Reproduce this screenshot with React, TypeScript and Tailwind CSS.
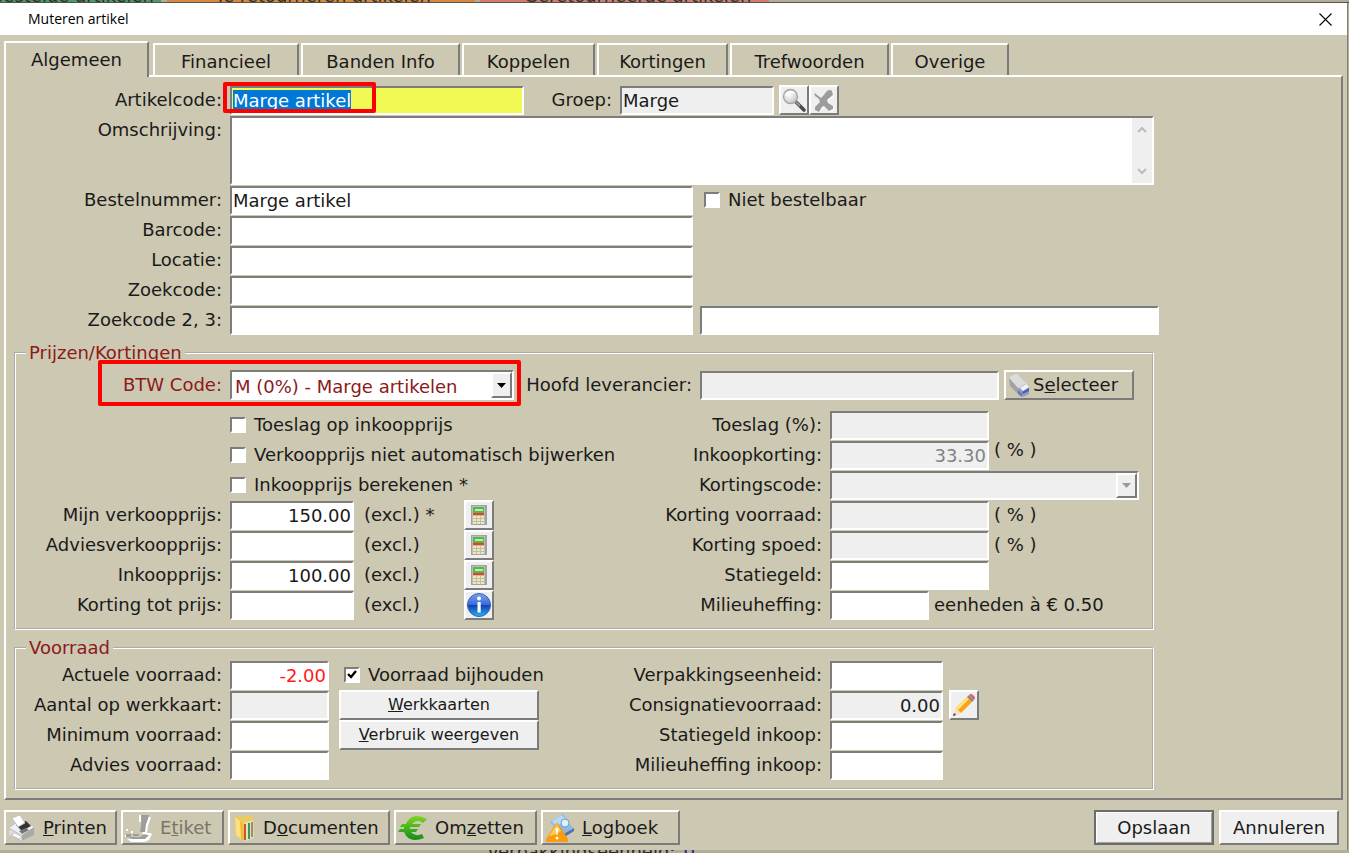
import { useEffect, useRef } from "react";
import type { ReactNode } from "react";

const sunken =
  "border-2 border-t-[#7d7d7d] border-l-[#7d7d7d] border-b-white border-r-white outline-none";
const raised =
  "border-2 border-t-white border-l-white border-b-[#7b7b7b] border-r-[#7b7b7b]";

type FieldProps = {
  id: string;
  width: string;
  value?: string;
  disabled?: boolean;
  right?: boolean;
  color?: string;
};

function Field({ id, width, value = "", disabled, right, color = "text-[#1a1a1a]" }: FieldProps) {
  return (
    <input
      id={id}
      type="text"
      defaultValue={value}
      readOnly={disabled}
      className={`h-[29px] shrink-0 px-px pt-px ${sunken} ${width} ${color} ${
        disabled ? "bg-[#efefef]" : "bg-white"
      } ${right ? "text-right" : ""}`}
    />
  );
}

function Label({ htmlFor, width = "w-[206px]", children }: { htmlFor: string; width?: string; children: ReactNode }) {
  return (
    <label htmlFor={htmlFor} className={`mr-2 shrink-0 whitespace-nowrap text-right ${width}`}>
      {children}
    </label>
  );
}

function Row({ children }: { children: ReactNode }) {
  return <div className="relative flex h-[30px] items-center">{children}</div>;
}

function Check({ id, label, checked }: { id: string; label: string; checked?: boolean }) {
  return (
    <div className="flex items-center gap-2">
      <span className="relative flex h-4 w-4">
        <input id={id} type="checkbox" defaultChecked={checked} className={`peer h-4 w-4 appearance-none bg-white ${sunken}`} />
        <svg
          viewBox="0 0 16 16"
          className="pointer-events-none absolute inset-0 hidden peer-checked:block"
          fill="none"
          stroke="#000"
          strokeWidth="2.4"
        >
          <path d="M4 7l3 3 5-6" />
        </svg>
      </span>
      <label htmlFor={id} className="whitespace-nowrap">
        {label}
      </label>
    </div>
  );
}

function IconButton({ label, disabled, children }: { label: string; disabled?: boolean; children: ReactNode }) {
  return (
    <button
      type="button"
      aria-label={label}
      disabled={disabled}
      className={`flex h-[30px] w-[30px] shrink-0 items-center justify-center bg-[#efefef] ${raised}`}
    >
      {children}
    </button>
  );
}

function Group({ title, children }: { title: string; children: ReactNode }) {
  return (
    <fieldset className="w-full max-w-[1140px] border-2 border-white pb-2 [border-style:groove]">
      <legend className="ml-[10px] px-[3px] leading-5 text-[#8b1a1a]">{title}</legend>
      {children}
    </fieldset>
  );
}

/* Icons */

function SearchIcon() {
  return (
    <svg width="26" height="26" viewBox="0 0 26 26">
      <defs>
        <radialGradient id="lens" cx="0.4" cy="0.35" r="0.7">
          <stop offset="0" stopColor="#fff" />
          <stop offset="1" stopColor="#c4c4c4" />
        </radialGradient>
      </defs>
      <path d="M15 15l8 8" stroke="#4a4a4a" strokeWidth="3.6" strokeLinecap="round" />
      <path d="M15 15l4 4" stroke="#999" strokeWidth="2" />
      <circle cx="9.5" cy="9.5" r="7" fill="url(#lens)" stroke="#a6a6a6" strokeWidth="1.4" />
      <path d="M4.5 8.5a6 5 0 0 1 9-2.500" stroke="#fff" strokeWidth="1.6" fill="none" />
    </svg>
  );
}

function ClearIcon() {
  return (
    <svg width="24" height="24" viewBox="0 0 24 24">
      <path
        d="M2 5l2 1 5 4 2-2 4-5q3-2 5 0l1 4-6 5 1 3 5 3v3l-4 2-5-5-2 1-3 5-4-2v-3l5-5-1-3-4-3z"
        fill="#fff"
        transform="translate(1 1)"
      />
      <path d="M2 5l2 1 5 4 2-2 4-5q3-2 5 0l1 4-6 5 1 3 5 3v3l-4 2-5-5-2 1-3 5-4-2v-3l5-5-1-3-4-3z" fill="#9c9c9c" />
    </svg>
  );
}

function CalculatorIcon() {
  return (
    <svg width="16" height="20" viewBox="0 0 16 20" shapeRendering="crispEdges" className="shrink-0">
      <rect x="0" y="0" width="16" height="20" fill="#a2a2a0" />
      <rect x="1" y="1" width="13" height="18" fill="#bcbcba" />
      <rect x="2" y="2" width="11" height="6" fill="#55b84e" />
      <rect x="4" y="4" width="8" height="2" fill="#b5f5a0" />
      <rect x="2" y="8" width="11" height="2" fill="#ee3d22" />
      {[11, 14, 17].map((y) =>
        [2, 6, 10].map((x) => <rect key={`${x}-${y}`} x={x} y={y} width="3" height="2" fill="#eeeaae" />)
      )}
    </svg>
  );
}

function InfoIcon() {
  return (
    <svg width="26" height="26" viewBox="0 0 26 26">
      <defs>
        <linearGradient id="info" x1="0" y1="0" x2="0" y2="1">
          <stop offset="0" stopColor="#7aa2ee" />
          <stop offset="0.48" stopColor="#3b6bd8" />
          <stop offset="0.52" stopColor="#1440b4" />
          <stop offset="1" stopColor="#25b4f0" />
        </linearGradient>
      </defs>
      <circle cx="13" cy="13" r="11.5" fill="url(#info)" stroke="#3c5fc0" strokeWidth="1" />
      <circle cx="13" cy="6.5" r="2" fill="#fff" />
      <rect x="11.5" y="10" width="3.200" height="10.500" fill="#fff" />
    </svg>
  );
}

function TruckIcon() {
  return (
    <svg width="24" height="26" viewBox="0 0 24 26" className="shrink-0">
      <path d="M2 6q4-4 8-4l10 10-8 6z" fill="#dcdcdc" />
      <path d="M2 6l10 11-1 5-8-8z" fill="#a2a2a2" />
      <path d="M11 17l7-5 4 4v6l-6 3-5-4z" fill="#8d9cc8" />
      <path d="M13 16l6-4 3 3-6 4z" fill="#f2f4fb" />
      <path d="M15 20l7-4v3l-6 3z" fill="#4a62ab" />
      <path d="M11 18l4 4v3l-4-3z" fill="#6876a0" />
    </svg>
  );
}

function PrinterIcon() {
  return (
    <svg width="30" height="28" viewBox="0 0 30 28" className="shrink-0">
      <path d="M2 14l9-7 16 6v8l-13 6L2 21z" fill="#a9a9a9" />
      <path d="M2 14l10-7 15 6-12 8z" fill="#f0f0f0" />
      <path d="M2 15l13 6v6L2 21z" fill="#dcdcdc" />
      <path d="M9 11l10-4 5 5-9 5z" fill="#333" />
      <path d="M5 4l8-3 5 8-7 4z" fill="#fff" stroke="#bbb" strokeWidth="0.8" />
      <path d="M12 17l7-3 3 2-7 4z" fill="#777" />
      <path d="M4 21l8 4 3-2-7-4z" fill="#fff" stroke="#aaa" strokeWidth="0.6" />
    </svg>
  );
}

function StampIcon() {
  return (
    <svg width="30" height="28" viewBox="0 0 30 28" className="shrink-0">
      <path d="M15 1h3v4l-1 3h-2zM24 3h3l-3 9-1 7h3l2 1-3 6-4 2H7l-4-3h16l4-5h-5z" fill="#fff" />
      <path d="M17 1h8q-1 5-3 9l-1 8h-5q2-8 1-17z" fill="#9d9d9d" />
      <path d="M2 20h5v3H2zM9 20h6v2H9zM19 21h6l-4 4H8l-3-2h11z" fill="#9d9d9d" />
      <path d="M2 15h2v2H2zM7 17h2v2H7zM1 21h1v2H1z" fill="#fff" />
    </svg>
  );
}

function FolderIcon() {
  return (
    <svg width="26" height="28" viewBox="0 0 26 28" className="shrink-0">
      <path d="M4 3l18-1 1 20-9 4z" fill="#efca5c" />
      <path d="M13 9l9-3 1 18-9 3z" fill="#e3dfd0" />
      <path d="M13 10h2v16h-2z" fill="#c8572f" />
      <path d="M17 9h2v16h-2z" fill="#3d9a3d" />
      <path d="M20 8h2v15h-2z" fill="#a58b62" />
      <path d="M4 3l8 6 1 18-8-6z" fill="#f2bb34" />
      <path d="M4 3l5 4 1 18-5-4z" fill="#ffdf80" />
    </svg>
  );
}

function EuroIcon() {
  return (
    <svg width="32" height="28" viewBox="0 0 32 28" className="shrink-0" fill="none">
      <defs>
        <linearGradient id="euro" x1="0" y1="0" x2="0" y2="1">
          <stop offset="0" stopColor="#7bd820" />
          <stop offset="1" stopColor="#138c1a" />
        </linearGradient>
      </defs>
      <path
        d="M30 5l-4 4q-6-5-11 1h9l-2 3h-9v2h8l-2 3h-5q4 5 11 2l2 4q-15 6-20-6H1l2-3h4v-2H3l2-3h4Q15-3 30 5z"
        fill="url(#euro)"
      />
    </svg>
  );
}

function LogIcon() {
  return (
    <svg width="32" height="30" viewBox="0 0 32 30" className="shrink-0">
      <path d="M6 9l13-8 10 14-11 8z" fill="#8fb9e2" />
      <path d="M18 22l12-7v3l-11 7z" fill="#4f75a8" />
      <path d="M8 8l10-6 4 5-10 7z" fill="#b9d8f3" />
      <circle cx="21" cy="10" r="4" fill="#dff0fc" stroke="#6fa0d2" />
      <path d="M13 10q1 0 2 2l9 14q1 3-2 3H4q-3 0-2-3l9-14q1-2 2-2z" fill="#fb9a0c" />
      <path d="M13 11l4 7q-5 4-12 5z" fill="#ffcb52" />
      <path d="M11.500 15h3l-1 7h-1z" fill="#fff" />
      <circle cx="13" cy="25" r="1.500" fill="#fff" />
    </svg>
  );
}

function PencilIcon() {
  return (
    <svg width="26" height="26" viewBox="0 0 26 26">
      <path d="M2 24l3-8 5 5z" fill="#f6dfb4" />
      <path d="M2 24l1-3 2 2z" fill="#333" />
      <path d="M5 16L16 5l5 5-11 11z" fill="#fba21a" />
      <path d="M5 16L16 5l2 2L7 18z" fill="#ffe27a" />
      <path d="M16 5l2-2 5 5-2 2z" fill="#8a8a8a" />
      <path d="M18 3q2-2 4 0l1 1q2 2 0 4z" fill="#e0606a" />
    </svg>
  );
}

function ToolButton({ width, icon, disabled, children }: { width: string; icon: ReactNode; disabled?: boolean; children: ReactNode }) {
  return (
    <button
      type="button"
      disabled={disabled}
      className={`flex h-[35px] items-center gap-[6px] whitespace-nowrap pl-px ${raised} ${width} ${
        disabled ? "text-[#77756c]" : ""
      }`}
    >
      {icon}
      <span>{children}</span>
    </button>
  );
}

const tabs = [
  { name: "Financieel", width: "w-[146px]" },
  { name: "Banden Info", width: "w-[159px]" },
  { name: "Koppelen", width: "w-[133px]" },
  { name: "Kortingen", width: "w-[131px]" },
  { name: "Trefwoorden", width: "w-[159px]" },
  { name: "Overige", width: "w-[118px]" },
];

const prices = [
  { id: "verkoop", label: "Mijn verkoopprijs:", value: "150.00", note: "(excl.) *" },
  { id: "advies", label: "Adviesverkoopprijs:", value: "", note: "(excl.)" },
  { id: "inkoop", label: "Inkoopprijs:", value: "100.00", note: "(excl.)" },
  { id: "korting", label: "Korting tot prijs:", value: "", note: "(excl.)", info: true },
];

export default function App() {
  const codeRef = useRef<HTMLInputElement>(null);

  useEffect(() => {
    codeRef.current?.focus();
    codeRef.current?.select();
  }, []);

  return (
    <div className="flex min-h-screen flex-col bg-[#b3ad98] font-['DejaVu_Sans',Verdana,sans-serif] text-[18px] leading-5 text-[#1a1a1a]">
      {/* Window behind the dialog */}
      <div className="flex h-[3px] items-end overflow-hidden whitespace-nowrap border-b border-[#55534a] leading-3 text-[#33302a]">
        <span className="flex w-[161px] justify-end bg-[#4d9a68] pr-[7px]">bestelde artikelen</span>
        <span className="ml-[6px] w-[308px] bg-[#d6893f] pl-[48px]">Te retourneren artikelen</span>
        <span className="ml-[5px] w-[289px] bg-[#cf7d70] pl-[44px]">Geretourneerde artikelen</span>
      </div>

      <div className="mr-px flex flex-col border-r border-[#85816f] bg-[#cdc8b1]">
        <header className="flex h-8 items-center justify-between bg-white pl-7 pr-[15px] font-['Open_Sans',sans-serif] text-[14px] text-black">
          <h1>Muteren artikel</h1>
          <button type="button" aria-label="Sluiten">
            <svg width="13" height="13" viewBox="0 0 13 13" stroke="#000" strokeWidth="1.100">
              <path d="M0.500 0.500l12 12M12.500 0.500l-12 12" />
            </svg>
          </button>
        </header>

        <form className="px-1 pt-[6px]" onSubmit={(e) => e.preventDefault()}>
          <div role="tablist" className="flex items-end gap-[2px]">
            <button
              type="button"
              role="tab"
              aria-selected="true"
              className="relative mr-[2px] -mb-[2px] h-[36px] w-[145px] border-2 border-b-0 border-t-white border-l-white border-r-[#7b7b7b] bg-[#cdc8b1]"
            >
              Algemeen
            </button>
            {tabs.map((tab) => (
              <button
                key={tab.name}
                type="button"
                role="tab"
                aria-selected="false"
                className={`h-8 whitespace-nowrap border-2 border-b-0 border-t-white border-l-white border-r-[#7b7b7b] pt-1 ${tab.width}`}
              >
                {tab.name}
              </button>
            ))}
          </div>

          <div className="border-2 border-t-white border-l-white border-b-[#7b7b7b] border-r-[#7b7b7b] pb-2 pl-2 pt-2">
            <div className="mb-2 pl-[2px]">
              <Row>
                <Label htmlFor="artikelcode">Artikelcode:</Label>
                <input
                  id="artikelcode"
                  ref={codeRef}
                  type="text"
                  defaultValue="Marge artikel"
                  className={`h-[29px] w-[294px] bg-[#f1f955] px-px pt-px selection:bg-[#0078d7] selection:text-white ${sunken}`}
                />
                <Label htmlFor="groep" width="w-[88px]">Groep:</Label>
                <Field id="groep" width="w-[154px]" value="Marge" disabled />
                <div className="ml-[5px] flex">
                  <IconButton label="Zoeken"><SearchIcon /></IconButton>
                  <IconButton label="Wissen" disabled><ClearIcon /></IconButton>
                </div>
                <div className="pointer-events-none absolute -top-[3px] left-[207px] h-[31px] w-[153px] rounded-xs border-4 border-[#fe0000]" />
              </Row>
              <div className="flex h-[70px] items-start pt-px">
                <div className="flex h-7 items-center">
                  <Label htmlFor="omschrijving">Omschrijving:</Label>
                </div>
                <div className={`flex h-[69px] w-[924px] bg-white ${sunken}`}>
                  <textarea id="omschrijving" className="flex-1 resize-none overflow-hidden outline-none" />
                  <div className="flex w-5 flex-col items-center justify-between bg-[#efefef] py-2">
                    <svg width="10" height="7" viewBox="0 0 10 7" fill="none" stroke="#bcbcbc" strokeWidth="2">
                      <path d="M1 6l4-4 4 4" />
                    </svg>
                    <svg width="10" height="7" viewBox="0 0 10 7" fill="none" stroke="#bcbcbc" strokeWidth="2">
                      <path d="M1 1l4 4 4-4" />
                    </svg>
                  </div>
                </div>
              </div>
              <Row>
                <Label htmlFor="bestelnummer">Bestelnummer:</Label>
                <Field id="bestelnummer" width="w-[463px] mr-[11px]" value="Marge artikel" />
                <Check id="nietbestelbaar" label="Niet bestelbaar" />
              </Row>
              <Row>
                <Label htmlFor="barcode">Barcode:</Label>
                <Field id="barcode" width="w-[463px]" />
              </Row>
              <Row>
                <Label htmlFor="locatie">Locatie:</Label>
                <Field id="locatie" width="w-[463px]" />
              </Row>
              <Row>
                <Label htmlFor="zoekcode">Zoekcode:</Label>
                <Field id="zoekcode" width="w-[463px]" />
              </Row>
              <Row>
                <Label htmlFor="zoekcode2">Zoekcode 2, 3:</Label>
                <Field id="zoekcode2" width="w-[463px] mr-[7px]" />
                <input aria-label="Zoekcode 3" type="text" className={`h-[29px] w-[459px] bg-white ${sunken}`} />
              </Row>
            </div>

            <Group title="Prijzen/Kortingen">
              <div className="mb-[10px] pt-[7px]">
                <Row>
                  <label htmlFor="btw" className="mr-2 w-[206px] shrink-0 text-right text-[#8b1a1a]">
                    BTW Code:
                  </label>
                  <div className="relative flex">
                    <select id="btw" className={`h-[30px] w-[284px] appearance-none bg-white pl-[3px] pt-[3px] text-[#8b1a1a] ${sunken}`}>
                      <option>M (0%) - Marge artikelen</option>
                    </select>
                    <span className={`pointer-events-none absolute right-[2px] top-[2px] flex h-[26px] w-[21px] items-center justify-center bg-[#efefef] ${raised}`}>
                      <svg width="9" height="5" viewBox="0 0 9 5"><path d="M0 0h9L4.500 5z" fill="#000" /></svg>
                    </span>
                  </div>
                  <Label htmlFor="leverancier" width="w-[178px]">Hoofd leverancier:</Label>
                  <Field id="leverancier" width="w-[299px]" disabled />
                  <button type="button" className={`ml-[5px] flex h-[30px] w-[130px] items-center gap-[2px] pl-px ${raised}`}>
                    <TruckIcon />
                    <span>S<u>e</u>lecteer</span>
                  </button>
                  <div className="pointer-events-none absolute -top-[10px] left-[82px] h-[46px] w-[423px] rounded-xs border-4 border-[#fe0000]" />
                </Row>
              </div>
              <div className="flex">
                <div className="w-[610px] shrink-0">
                  <div className="pl-[214px]">
                    <Row><Check id="toeslagop" label="Toeslag op inkoopprijs" /></Row>
                    <Row><Check id="nietauto" label="Verkoopprijs niet automatisch bijwerken" /></Row>
                    <Row><Check id="berekenen" label="Inkoopprijs berekenen *" /></Row>
                  </div>
                  {prices.map((price) => (
                    <Row key={price.id}>
                      <Label htmlFor={price.id}>{price.label}</Label>
                      <Field id={price.id} width="w-[124px]" value={price.value} right />
                      <span className="w-[110px] pl-[10px]">{price.note}</span>
                      <IconButton label={price.info ? "Informatie" : "Berekenen"}>
                        {price.info ? <InfoIcon /> : <CalculatorIcon />}
                      </IconButton>
                    </Row>
                  ))}
                </div>
                <div>
                  <Row>
                    <Label htmlFor="toeslag" width="w-[196px]">Toeslag (%):</Label>
                    <Field id="toeslag" width="w-[159px]" disabled />
                  </Row>
                  <Row>
                    <Label htmlFor="inkoopkorting" width="w-[196px]">Inkoopkorting:</Label>
                    <Field id="inkoopkorting" width="w-[159px]" value="33.30" color="text-[#838383]" disabled right />
                    <span className="self-start pl-[5px]">( % )</span>
                  </Row>
                  <Row>
                    <Label htmlFor="kortingscode" width="w-[196px]">Kortingscode:</Label>
                    <div className="relative flex">
                      <select id="kortingscode" disabled className={`h-[29px] w-[309px] appearance-none bg-[#efefef] ${sunken}`} />
                      <span className={`pointer-events-none absolute right-[2px] top-[2px] flex h-[25px] w-[21px] items-center justify-center bg-[#efefef] ${raised}`}>
                        <svg width="9" height="5" viewBox="0 0 9 5"><path d="M0 0h9L4.500 5z" fill="#9a9a9a" /></svg>
                      </span>
                    </div>
                  </Row>
                  <Row>
                    <Label htmlFor="kvoorraad" width="w-[196px]">Korting voorraad:</Label>
                    <Field id="kvoorraad" width="w-[159px]" disabled />
                    <span className="pl-[5px]">( % )</span>
                  </Row>
                  <Row>
                    <Label htmlFor="kspoed" width="w-[196px]">Korting spoed:</Label>
                    <Field id="kspoed" width="w-[159px]" disabled />
                    <span className="pl-[5px]">( % )</span>
                  </Row>
                  <Row>
                    <Label htmlFor="statiegeld" width="w-[196px]">Statiegeld:</Label>
                    <Field id="statiegeld" width="w-[159px]" />
                  </Row>
                  <Row>
                    <Label htmlFor="milieu" width="w-[196px]">Milieuheffing:</Label>
                    <Field id="milieu" width="w-[99px]" />
                    <span className="whitespace-nowrap pl-[5px]">eenheden à € 0.50</span>
                  </Row>
                </div>
              </div>
            </Group>

            <div className="mt-2">
              <Group title="Voorraad">
                <div className="flex pt-[2px]">
                  <div className="w-[313px] shrink-0">
                    <Row>
                      <Label htmlFor="actueel">Actuele voorraad:</Label>
                      <Field id="actueel" width="w-[99px]" value="-2.00" color="text-[#ff1a1a]" right />
                    </Row>
                    <Row>
                      <Label htmlFor="werkkaart">Aantal op werkkaart:</Label>
                      <Field id="werkkaart" width="w-[99px]" disabled />
                    </Row>
                    <Row>
                      <Label htmlFor="minimum">Minimum voorraad:</Label>
                      <Field id="minimum" width="w-[99px]" />
                    </Row>
                    <Row>
                      <Label htmlFor="adviesvoorraad">Advies voorraad:</Label>
                      <Field id="adviesvoorraad" width="w-[99px]" />
                    </Row>
                  </div>
                  <div className="w-[297px] shrink-0 pl-[10px] text-[16px]">
                    <div className="pl-[5px] text-[18px]">
                      <Row><Check id="bijhouden" label="Voorraad bijhouden" checked /></Row>
                    </div>
                    <button type="button" className={`block h-[30px] w-[200px] bg-[#efefef] ${raised}`}>
                      <u>W</u>erkkaarten
                    </button>
                    <button type="button" className={`block h-[30px] w-[200px] whitespace-nowrap bg-[#efefef] ${raised}`}>
                      <u>V</u>erbruik weergeven
                    </button>
                  </div>
                  <div>
                    <Row>
                      <Label htmlFor="verpakking" width="w-[196px]">Verpakkingseenheid:</Label>
                      <Field id="verpakking" width="w-[113px]" />
                    </Row>
                    <Row>
                      <Label htmlFor="consignatie" width="w-[196px]">Consignatievoorraad:</Label>
                      <Field id="consignatie" width="w-[113px] mr-[6px]" value="0.00" disabled right />
                      <IconButton label="Bewerken"><PencilIcon /></IconButton>
                    </Row>
                    <Row>
                      <Label htmlFor="statinkoop" width="w-[196px]">Statiegeld inkoop:</Label>
                      <Field id="statinkoop" width="w-[113px]" />
                    </Row>
                    <Row>
                      <Label htmlFor="milieuinkoop" width="w-[196px]">Milieuheffing inkoop:</Label>
                      <Field id="milieuinkoop" width="w-[113px]" />
                    </Row>
                  </div>
                </div>
              </Group>
            </div>
          </div>

          <footer className="flex items-center justify-between pb-[5px] pr-1 pt-[10px]">
            <div className="flex gap-1">
              <ToolButton width="w-[113px]" icon={<PrinterIcon />}><u>P</u>rinten</ToolButton>
              <ToolButton width="w-[103px]" icon={<StampIcon />} disabled>E<u>t</u>iket</ToolButton>
              <ToolButton width="w-[162px]" icon={<FolderIcon />}>D<u>o</u>cumenten</ToolButton>
              <ToolButton width="w-[143px]" icon={<EuroIcon />}>Om<u>z</u>etten</ToolButton>
              <ToolButton width="w-[139px]" icon={<LogIcon />}><u>L</u>ogboek</ToolButton>
            </div>
            <div className="flex gap-[5px]">
              <button type="submit" className="h-[35px] w-[120px] border-2 border-[#6b6b6b] bg-[#efefef] shadow-[inset_1px_1px_0_#fff,inset_-1px_-1px_0_#a0a0a0]">
                Opslaan
              </button>
              <button type="button" className={`h-[35px] w-[120px] bg-[#efefef] ${raised}`}>
                Annuleren
              </button>
            </div>
          </footer>
        </form>
      </div>

      <div className="flex h-[3px] items-center overflow-hidden pl-[487px] text-[#2b2924]">
        <span>Verpakkingseenheid:</span>
        <span className="pl-2 text-[#2222a0]">0</span>
      </div>
    </div>
  );
}
